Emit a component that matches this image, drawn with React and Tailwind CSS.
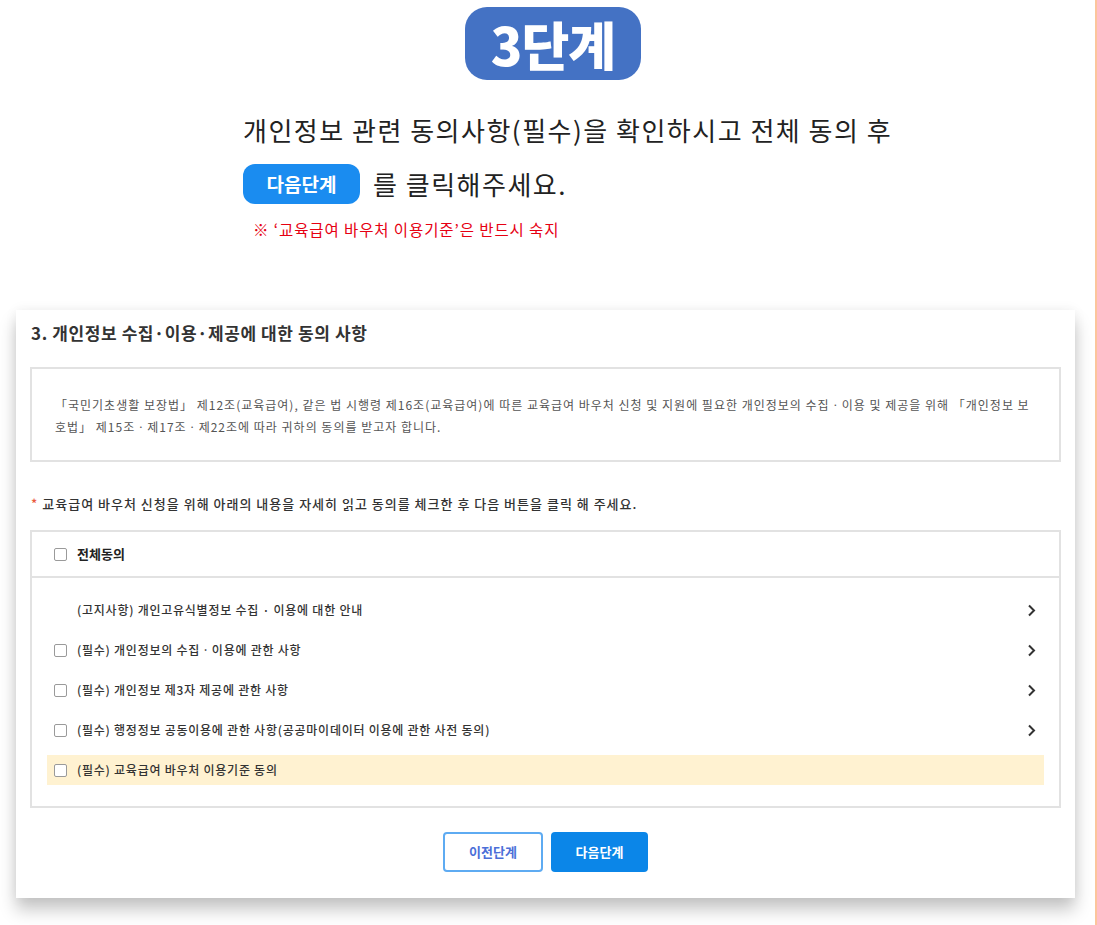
import React, { useState } from 'react'

const ITEMS = [
  { label: '(고지사항) 개인고유식별정보 수집 · 이용에 대한 안내', check: false, arrow: true },
  { label: '(필수) 개인정보의 수집ㆍ이용에 관한 사항', check: true, arrow: true },
  { label: '(필수) 개인정보 제3자 제공에 관한 사항', check: true, arrow: true },
  { label: '(필수) 행정정보 공동이용에 관한 사항(공공마이데이터 이용에 관한 사전 동의)', check: true, arrow: true },
  { label: '(필수) 교육급여 바우처 이용기준 동의', check: true, arrow: false, highlight: true },
]

function Checkbox({ checked, onChange }) {
  return (
    <button
      type="button"
      onClick={onChange}
      className={`w-[13px] h-[13px] shrink-0 rounded-[2px] border-[1.5px] ${
        checked ? 'border-[#0b86e8] bg-[#0b86e8]' : 'border-[#9a9a9a] bg-white'
      }`}
      aria-label="동의"
    />
  )
}

function Chevron() {
  return (
    <svg width="9" height="13" viewBox="0 0 9 13" className="shrink-0">
      <polyline points="2,1.5 7,6.5 2,11.5" fill="none" stroke="#333" strokeWidth="2" />
    </svg>
  )
}

export default function App() {
  const [checks, setChecks] = useState(ITEMS.map(() => false))
  const allChecked = checks.every((c, i) => !ITEMS[i].check || c)

  const toggleAll = () => {
    const next = !allChecked
    setChecks(ITEMS.map(() => next))
  }

  const toggle = (i) => {
    setChecks((prev) => prev.map((c, j) => (j === i ? !c : c)))
  }

  return (
    <div className="w-[1097px] min-h-[925px] bg-white border-r-2 border-[#fcc59c] overflow-hidden font-['Noto_Sans_CJK_KR',sans-serif]">
      {/* Step badge */}
      <div className="pl-[465px] pt-[7px]">
        <div className="w-[176px] h-[73px] rounded-[22px] bg-[#4472c4] flex items-center justify-center">
          <span className="text-white text-[52px] font-black tracking-[-1px] leading-none">3단계</span>
        </div>
      </div>

      {/* Guide text */}
      <div className="pl-[243px] mt-[33px]">
        <p className="text-[26px] leading-[34px] text-[#222] tracking-[1.5px]">
          개인정보 관련 동의사항(필수)을 확인하시고 전체 동의 후
        </p>
        <div className="mt-[17px] flex items-center gap-[13px]">
          <span className="w-[117px] h-[40px] rounded-[12px] bg-[#1a8cf0] flex items-center justify-center text-white text-[19px] font-bold">
            다음단계
          </span>
          <span className="text-[26px] leading-[34px] text-[#222] tracking-[1.5px]">를 클릭해주세요.</span>
        </div>
        <p className="mt-[15px] pl-[10px] text-[15.5px] leading-[20px] text-[#e60012] tracking-[0.9px]">
          ※ ‘교육급여 바우처 이용기준’은 반드시 숙지
        </p>
      </div>

      {/* Card */}
      <div className="ml-[16px] mt-[71px] w-[1059px] bg-white px-[14px] pt-[11px] pb-[26px] shadow-[0_12px_16px_rgba(0,0,0,0.22),0_0_12px_rgba(0,0,0,0.06)]">
        <h2 className="pl-[1px] text-[17px] leading-[24px] font-semibold text-[#333] tracking-[0.6px]">
          3. 개인정보 수집·이용·제공에 대한 동의 사항
        </h2>

        <div className="mt-[22px] border-2 border-[#e2e2e2] pl-[23px] pr-[10px] pt-[25px] pb-[22px] text-[12px] leading-[22px] text-[#555] tracking-[1px]">
          <p className="whitespace-nowrap">
            「국민기초생활 보장법」 제12조(교육급여), 같은 법 시행령 제16조(교육급여)에 따른 교육급여 바우처 신청 및 지원에 필요한 개인정보의 수집ㆍ이용 및 제공을 위해 「개인정보 보
          </p>
          <p className="whitespace-nowrap">호법」 제15조ㆍ제17조ㆍ제22조에 따라 귀하의 동의를 받고자 합니다.</p>
        </div>

        <p className="mt-[32px] pl-[1px] flex items-center gap-[4px] text-[13px] leading-[20px] font-medium text-[#333] tracking-[1px]">
          <span className="text-[#ea5a3d] text-[13px]">*</span>
          교육급여 바우처 신청을 위해 아래의 내용을 자세히 읽고 동의를 체크한 후 다음 버튼을 클릭 해 주세요.
        </p>

        <div className="mt-[16px] border-2 border-[#e2e2e2]">
          <div className="h-[46px] flex items-center gap-[10px] pl-[22px] border-b-2 border-[#e2e2e2]">
            <Checkbox checked={allChecked} onChange={toggleAll} />
            <span className="text-[13px] font-bold text-[#222]">전체동의</span>
          </div>

          <ul className="px-[15px] pt-[17px] pb-[21px] flex flex-col gap-[10px]">
            {ITEMS.map((item, i) => (
              <li
                key={item.label}
                className={`h-[30px] flex items-center pl-[7px] pr-[8px] ${item.highlight ? 'bg-[#fff2d1]' : ''}`}
              >
                <div className="flex items-center gap-[10px] flex-1">
                  {item.check ? (
                    <Checkbox checked={checks[i]} onChange={() => toggle(i)} />
                  ) : (
                    <span className="w-[13px] shrink-0" />
                  )}
                  <span className="text-[12px] font-medium text-[#333] tracking-[0.75px]">{item.label}</span>
                </div>
                {item.arrow && <Chevron />}
              </li>
            ))}
          </ul>
        </div>

        <div className="mt-[24px] flex justify-center gap-[8px]">
          <button className="w-[100px] h-[40px] rounded-[4px] border-2 border-[#5eabf2] bg-white text-[13px] font-bold text-[#4b6fd8]">
            이전단계
          </button>
          <button className="w-[97px] h-[40px] rounded-[4px] bg-[#0b86e8] text-[13px] font-bold text-white">
            다음단계
          </button>
        </div>
      </div>
    </div>
  )
}
